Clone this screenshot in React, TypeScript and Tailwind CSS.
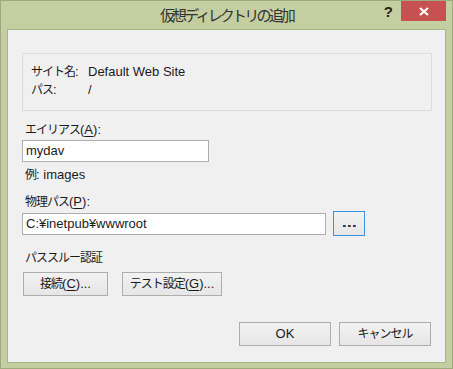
const font = { fontFamily: '"Liberation Sans", "Noto Sans CJK JP", sans-serif' };

function J({ children }: { children: React.ReactNode }) {
  // CJK runs are narrower in the original UI font
  return <span className="text-[12px] tracking-[-1px]">{children}</span>;
}

function Key({ k }: { k: string }) {
  return (
    <>
      (<span className="underline underline-offset-2">{k}</span>)
    </>
  );
}

function Btn({ w, children }: { w: string; children: React.ReactNode }) {
  return (
    <button
      className={`${w} h-[24px] flex items-center justify-center border border-[#adadad] bg-gradient-to-b from-[#f2f2f2] to-[#e6e6e6] text-[13px] text-[#1a1a1a]`}
    >
      {children}
    </button>
  );
}

export default function App() {
  return (
    <div
      className="w-[453px] h-[369px] flex flex-col bg-[#c4cea0] border border-[#9ea97c] text-[13px] text-[#1a1a1a]"
      style={font}
    >
      {/* title bar */}
      <div className="h-[28px] flex items-start px-[6px]">
        <div className="flex-1" />
        <div className="pt-[3px] text-[15px] tracking-[-2.8px] leading-[24px] text-[#333333]">
          仮想ディレクトリの追加
        </div>
        <div className="flex-1 flex justify-end items-start">
          <span className="mt-[2px] mr-[8px] text-[15px] font-bold leading-[18px] text-[#222222]">?</span>
          <button className="w-[45px] h-[20px] bg-[#c75050] flex items-center justify-center">
            <svg width="10" height="9" viewBox="0 0 10 9">
              <path d="M1 1 L9 8 M9 1 L1 8" stroke="#ffffff" strokeWidth="2.2" />
            </svg>
          </button>
        </div>
      </div>

      {/* client */}
      <div className="mx-[6px] h-[334px] border border-[#a9b386] bg-[#f0f0f0] flex flex-col pl-[14px] pr-[13px] pt-[23px]">
        <div className="h-[58px] border border-[#dcdcdc] pl-[8px] pt-[9px] leading-[18px]">
          <div className="grid grid-cols-[57px_1fr]">
            <span><J>サイト名</J>:</span>
            <span>Default Web Site</span>
          </div>
          <div className="grid grid-cols-[57px_1fr]">
            <span><J>パス</J>:</span>
            <span>/</span>
          </div>
        </div>

        <div className="mt-[10px] pl-[3px] leading-[18px]">
          <J>エイリアス</J><Key k="A" />:
        </div>
        <div className="mt-[1px] w-[187px] h-[22px] border border-[#abadb3] bg-white pl-[3px] leading-[20px]">
          mydav
        </div>
        <div className="mt-[4px] pl-[3px] leading-[18px]">
          <J>例</J>: images
        </div>

        <div className="mt-[9px] pl-[3px] leading-[18px]">
          <J>物理パス</J><Key k="P" />:
        </div>
        <div className="flex items-center h-[25px]">
          <div className="w-[304px] h-[22px] border border-[#abadb3] bg-white pl-[3px] leading-[20px]">
            C:¥inetpub¥wwwroot
          </div>
          <button className="ml-[7px] w-[32px] h-[25px] border border-[#3c90e6] bg-gradient-to-b from-[#f2f2f2] to-[#e6e6e6] flex items-center justify-center gap-[2px] pt-[4px]">
            <span className="w-[2px] h-[2px] bg-[#1f3d66] shadow-[1px_0_0_#8a5a2a]" />
            <span className="w-[2px] h-[2px] ml-[1px] bg-[#1f3d66] shadow-[1px_0_0_#8a5a2a]" />
            <span className="w-[2px] h-[2px] ml-[1px] bg-[#1f3d66] shadow-[1px_0_0_#8a5a2a]" />
          </button>
        </div>

        <div className="mt-[13px] pl-[3px] leading-[18px]">
          <J>パススルー認証</J>
        </div>
        <div className="mt-[5px] ml-[1px] flex gap-[14px]">
          <Btn w="w-[85px]">
            <J>接続</J><Key k="C" />...
          </Btn>
          <Btn w="w-[100px]">
            <J>テスト設定</J><Key k="G" />...
          </Btn>
        </div>

        <div className="mt-[26px] mr-[1px] flex justify-end gap-[8px]">
          <Btn w="w-[92px]">OK</Btn>
          <Btn w="w-[92px]">
            <J>キャンセル</J>
          </Btn>
        </div>
      </div>
    </div>
  );
}
